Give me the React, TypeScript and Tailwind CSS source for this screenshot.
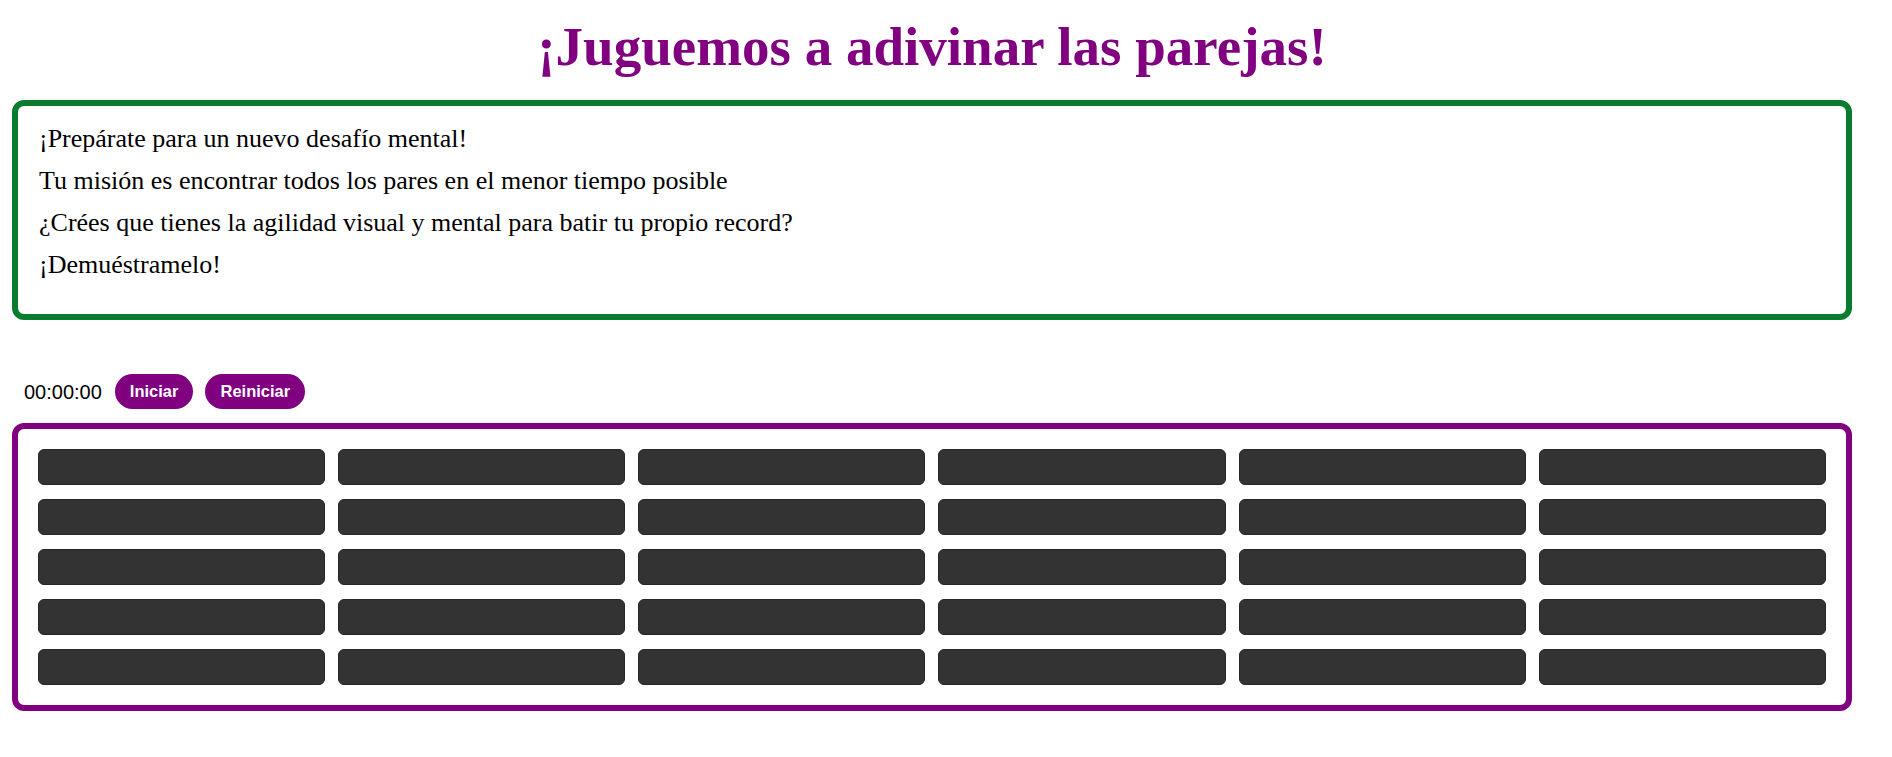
import React from 'react';

const cards = Array.from({ length: 30 }, (_, i) => i);

export default function App() {
  return (
    <div className="min-h-screen bg-white font-['Liberation_Serif','Times_New_Roman',serif] text-black">
      <div className="ml-[12px] w-[1840px]">
        <h1 className="pt-[16px] text-center text-[55px] leading-[62px] font-bold text-[#800080]">
          ¡Juguemos a adivinar las parejas!
        </h1>

        {/* Intro */}
        <div className="mt-[22px] h-[220px] rounded-[12px] border-[6px] border-[#0a7c2f] px-[21px] pt-[12px] text-[26px] leading-[42px]">
          <p>¡Prepárate para un nuevo desafío mental!</p>
          <p>Tu misión es encontrar todos los pares en el menor tiempo posible</p>
          <p>¿Crées que tienes la agilidad visual y mental para batir tu propio record?</p>
          <p>¡Demuéstramelo!</p>
        </div>

        {/* Timer + controls */}
        <div className="mt-[54px] flex h-[35px] items-center gap-[13px] pl-[12px] font-['Liberation_Sans',Arial,sans-serif]">
          <span className="text-[20px] leading-none">00:00:00</span>
          <div className="flex gap-[12px]">
            <button className="h-[35px] rounded-full bg-[#800080] px-[15px] text-[16.5px] font-bold text-white">
              Iniciar
            </button>
            <button className="h-[35px] rounded-full bg-[#800080] px-[15px] text-[16.5px] font-bold text-white">
              Reiniciar
            </button>
          </div>
        </div>

        {/* Board */}
        <div className="mt-[14px] grid grid-cols-6 gap-x-[13px] gap-y-[14px] rounded-[12px] border-[6px] border-[#800080] p-[20px]">
          {cards.map((c) => (
            <div key={c} className="h-[36px] rounded-[6px] border border-[#262626] bg-[#333333]" />
          ))}
        </div>

        <p className="mt-[36px] pl-[26px] text-[26px] leading-[42px]">
          Récord: 00:00:00
        </p>
      </div>
    </div>
  );
}
